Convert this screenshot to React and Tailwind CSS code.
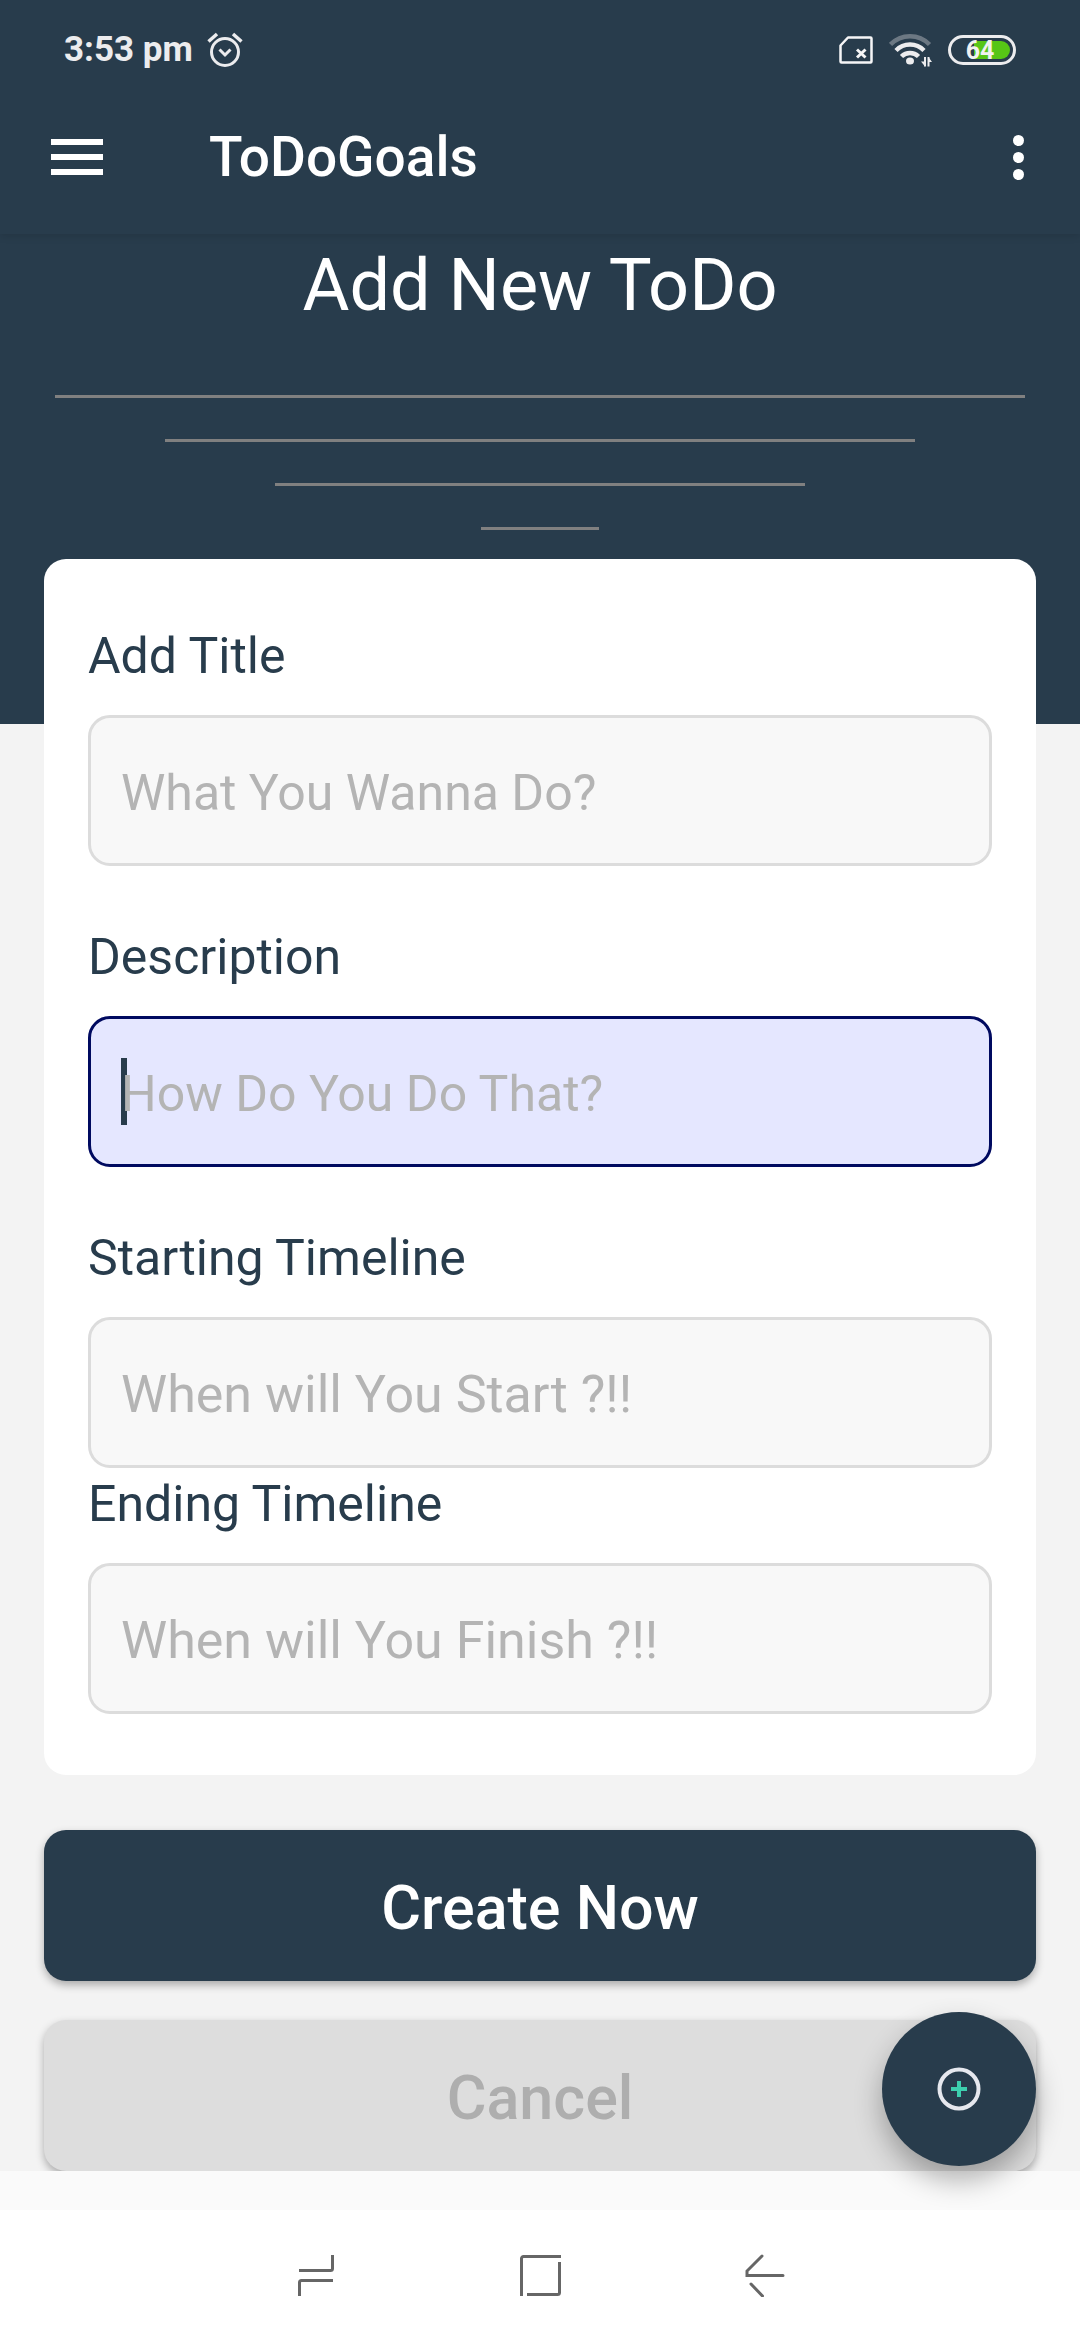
import React from "react";

function AlarmIcon() {
  return (
    <svg width="36" height="36" viewBox="0 0 36 36" fill="none" stroke="#ececee" strokeWidth="3" aria-hidden="true">
      <circle cx="18" cy="20" r="13.5" />
      <path d="M12.5 17.5 18 23l5.5-5.5" />
      <path d="M1.5 9.5 10 2M34.5 9.5 26 2" strokeWidth="3.5" />
    </svg>
  );
}

function SimIcon() {
  return (
    <svg width="34" height="28" viewBox="0 0 34 28" fill="none" stroke="#f6f6f7" strokeWidth="2.5" strokeLinejoin="round" aria-hidden="true">
      <path d="M9 1.5H31.5a1 1 0 0 1 1 1V25.5a1 1 0 0 1-1 1H2.5a1 1 0 0 1-1-1V9.5Z" />
      <path d="M18 13.5 26.500 21.5M26.500 13.5 18 21.5" strokeWidth="3" />
    </svg>
  );
}

function WifiIcon() {
  return (
    <svg width="43" height="34" viewBox="0 0 43 34" fill="none" stroke="#ececee" strokeWidth="4.5" aria-hidden="true">
      <path d="M1.500 11.500A27 27 0 0 1 40.500 11.500" stroke="#6c7883" />
      <path d="M7 17.500A19.500 19.500 0 0 1 35 17.500" />
      <path d="M12.500 23.500A12 12 0 0 1 29.500 23.500" />
      <ellipse cx="21" cy="28" rx="4" ry="3.5" fill="#ececee" stroke="none" />
      <path d="M36 24V33.500M39.500 33.500V24" strokeWidth="2" />
      <path d="M36 33.500 32 28.500H36ZM39.500 24 43 29H39.500Z" fill="#ececee" stroke="none" />
    </svg>
  );
}

function Battery({ level }) {
  return (
    <div className="relative flex h-[30px] w-[68px] items-center justify-end rounded-full border-[3px] border-[#ececee] px-[3px]">
      <div className="h-[18px] w-[36px] rounded-r-full bg-[#57c516]" />
      <span className="absolute inset-0 flex items-center justify-center pr-1 text-[25px] leading-none font-bold text-[#f1f1f1]">
        {level}
      </span>
    </div>
  );
}

function Field({ id, label, placeholder, active, large }) {
  return (
    <div>
      <label htmlFor={id} className="mb-[22px] block text-[50px] leading-[73px] text-[#283c4c]">
        {label}
      </label>
      <div
        className={`relative rounded-[22px] border-[3px] ${
          active ? "border-[#000a60] bg-[#e5e7ff]" : "border-[#dcdcdc] bg-[#f8f8f8]"
        }`}
      >
        {active && <span className="absolute top-[39px] left-[30px] h-[67px] w-[6px] bg-[#283c4c]" />}
        <input
          id={id}
          type="text"
          placeholder={placeholder}
          className={`relative block h-[145px] w-full bg-transparent px-[30px] pt-1 text-[#283c4c] outline-none placeholder:text-[#b4b4b4] ${
            large ? "text-[52px]" : "text-[50px]"
          }`}
        />
      </div>
    </div>
  );
}

export default function App() {
  return (
    <div className="flex min-h-screen flex-col bg-white font-[Roboto,sans-serif]">
      <header className="relative z-10 bg-[#283c4c] shadow-[0_2px_8px_rgba(0,0,0,0.12)]">
        <div className="flex h-20 items-center justify-between pt-5 pr-16 pl-16">
          <div className="flex items-center gap-[14px]">
            <span className="text-[35px] leading-10 font-bold text-[#ececee]">3:53 pm</span>
            <AlarmIcon />
          </div>
          <div className="flex items-center gap-4">
            <SimIcon />
            <WifiIcon />
            <Battery level="64" />
          </div>
        </div>
        <div className="flex h-[154px] items-center pr-11 pl-[51px]">
          <button type="button" aria-label="Open menu" className="flex w-[52px] flex-col gap-[9px]">
            <span className="h-[6px] w-full bg-white" />
            <span className="h-[6px] w-full bg-white" />
            <span className="h-[6px] w-full bg-white" />
          </button>
          <h1 className="ml-[106px] grow text-[55px] leading-16 font-medium text-white">ToDoGoals</h1>
          <button type="button" aria-label="More options" className="flex w-9 flex-col items-center gap-[6px]">
            <span className="size-[11px] rounded-full bg-white" />
            <span className="size-[11px] rounded-full bg-white" />
            <span className="size-[11px] rounded-full bg-white" />
          </button>
        </div>
      </header>

      <main className="relative grow bg-[#fafafa] pb-[39px]">
        <div className="overflow-hidden bg-[#f3f3f3]">
          <section className="bg-[#283c4c] pt-1 pb-[194px]">
            <h2 className="mb-[61px] text-center text-[72px] leading-[96px] text-white">Add New ToDo</h2>
            <div className="flex flex-col gap-[41px]">
              <div className="mx-[55px] h-[3px] bg-[#808080]" />
              <div className="mx-[165px] h-[3px] bg-[#808080]" />
              <div className="mx-[275px] h-[3px] bg-[#808080]" />
              <div className="mx-[481px] h-[3px] bg-[#808080]" />
            </div>
          </section>
          <form className="-mt-[165px] px-11" onSubmit={(e) => e.preventDefault()}>
            <div className="mb-[55px] rounded-[22px] bg-white px-11 py-[61px]">
              <div className="flex flex-col gap-[55px]">
                <Field id="title" label="Add Title" placeholder="What You Wanna Do?" />
                <Field id="description" label="Description" placeholder="How Do You Do That?" active />
                <div>
                  <Field id="start" label="Starting Timeline" placeholder="When will You Start ?!!" large />
                  <Field id="end" label="Ending Timeline" placeholder="When will You Finish ?!!" large />
                </div>
              </div>
            </div>
            <div className="flex flex-col gap-[39px]">
              <button
                type="submit"
                className="h-[151px] rounded-[22px] bg-[#283c4c] pt-[6px] text-[61px] font-medium text-white shadow-[0_4px_9px_rgba(0,0,0,0.3)]"
              >
                Create Now
              </button>
              <button
                type="button"
                className="h-[151px] rounded-[22px] bg-[#dddddd] pt-[6px] text-[61px] font-medium text-[#aeaeae] shadow-[0_4px_9px_rgba(0,0,0,0.3)]"
              >
                Cancel
              </button>
            </div>
          </form>
        </div>
        <button
          type="button"
          aria-label="Add"
          className="absolute right-11 bottom-11 flex size-[154px] items-center justify-center rounded-full bg-[#283c4c] shadow-[0_14px_28px_rgba(0,0,0,0.3)]"
        >
          <svg width="44" height="44" viewBox="0 0 44 44" fill="none" strokeWidth="4" aria-hidden="true">
            <circle cx="22" cy="22" r="19.5" stroke="#e6e8ee" />
            <path d="M22 14V30M14 22H30" stroke="#3dcfae" />
          </svg>
        </button>
      </main>

      <nav className="flex h-[130px] items-center justify-center gap-[181px]">
        <button type="button" aria-label="Recent apps">
          <svg width="44" height="44" viewBox="0 0 44 44" fill="none" stroke="#666" strokeWidth="3" aria-hidden="true">
            <path d="M39.500 2V15.500a2 2 0 0 1-2 2H6M6.500 43V29.500a2 2 0 0 1 2-2H40" />
          </svg>
        </button>
        <button type="button" aria-label="Home">
          <svg width="44" height="44" viewBox="0 0 44 44" fill="none" stroke="#666" strokeWidth="3" aria-hidden="true">
            <path d="M3.500 43V5.500a2 2 0 0 1 2-2H43M41.500 9V39.500a2 2 0 0 1-2 2H9" />
          </svg>
        </button>
        <button type="button" aria-label="Back">
          <svg width="44" height="44" viewBox="0 0 44 44" fill="none" stroke="#666" strokeWidth="3" strokeLinecap="round" aria-hidden="true">
            <path d="M19 3 4 18V22.500H40M8 31 19.500 43" />
          </svg>
        </button>
      </nav>
    </div>
  );
}
